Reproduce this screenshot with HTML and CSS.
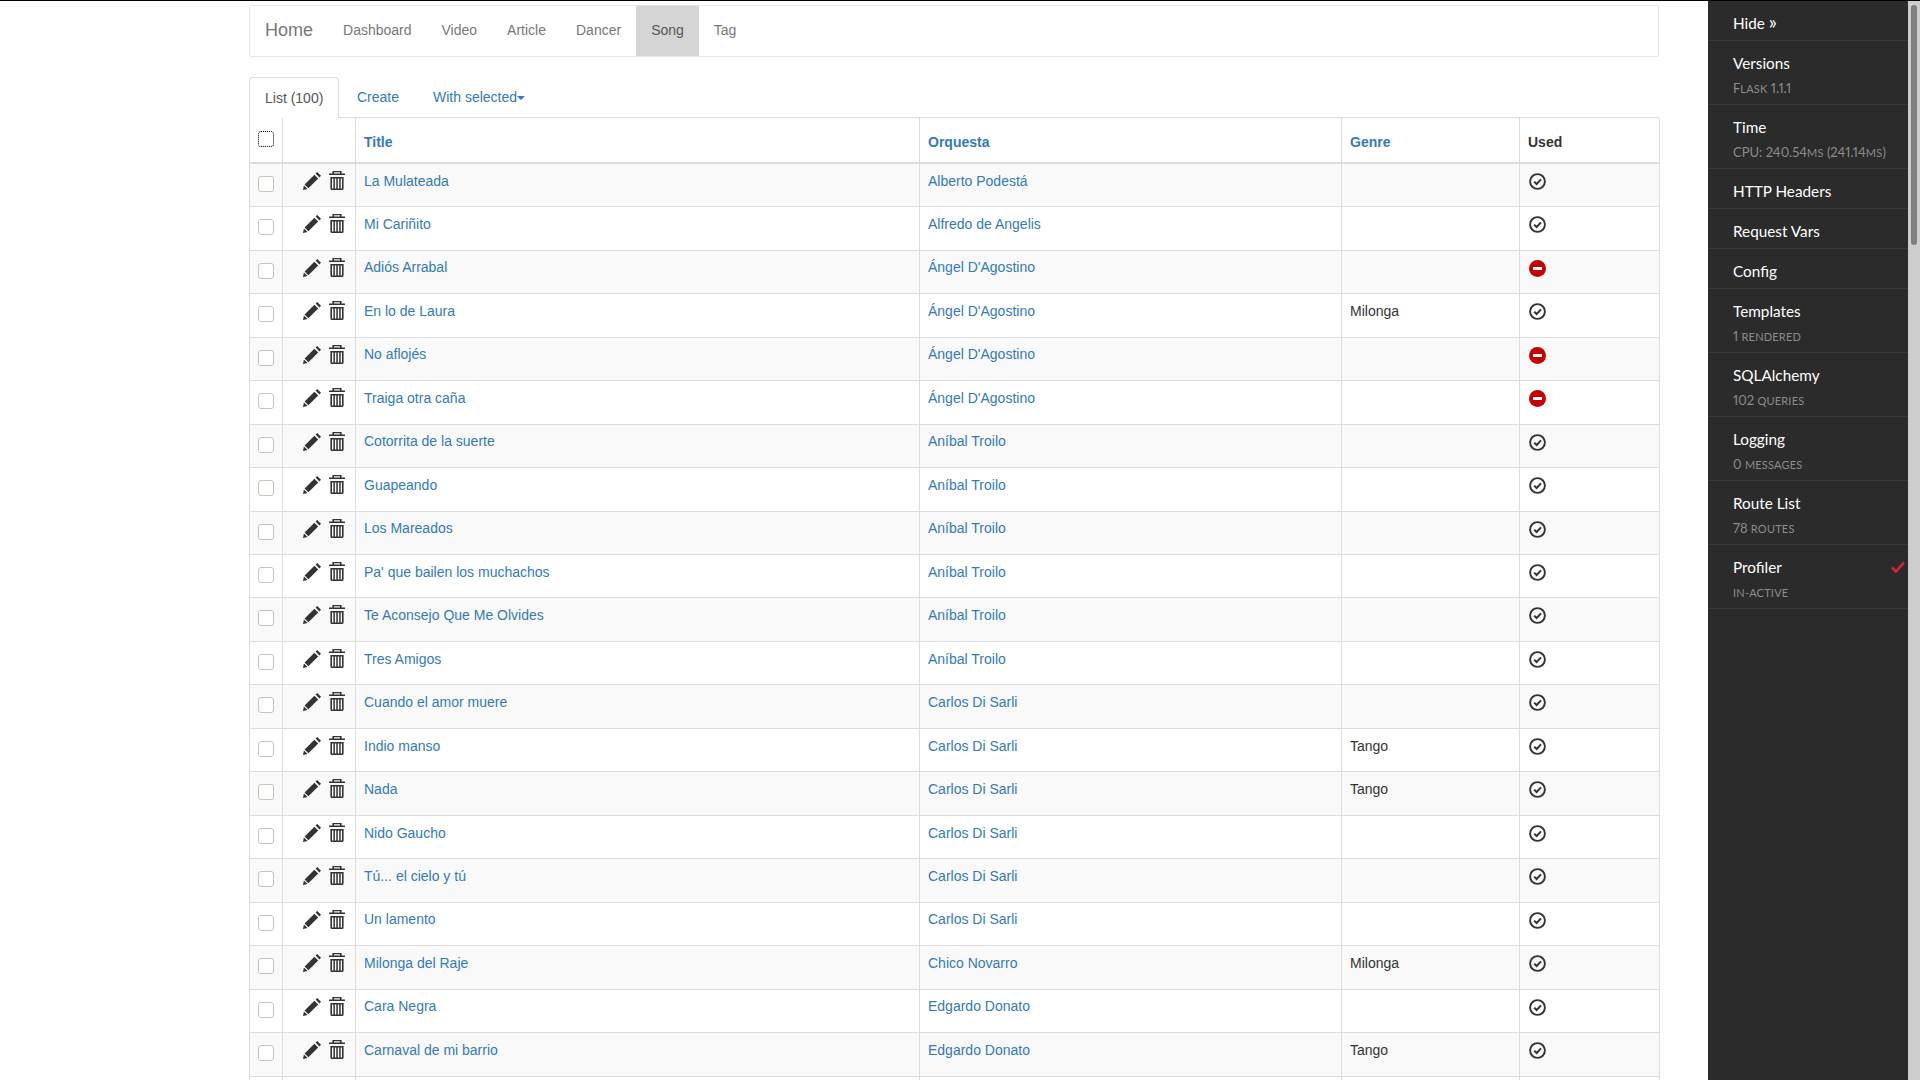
FILE: index.html
```html
<!DOCTYPE html>
<html lang="en">
<head>
<meta charset="utf-8">
<title>Song - Home</title>
<link rel="stylesheet" href="styles.css">
</head>
<body>
<svg class="defs" width="0" height="0" aria-hidden="true">
  <symbol id="pencil" viewBox="0 0 18 18">
    <path fill="#333" d="M0 18l.9-4.6 3.7 3.7zM1.6 12.4L11.4 2.8l3.8 3.8-9.8 9.7zM12.6 1.6L14.2 0 18 3.8l-1.6 1.6z"/>
  </symbol>
  <symbol id="trash" viewBox="0 0 16 19">
    <path fill="#333" d="M3.4 0h9.2v2.4H16V4H0V2.4h3.4zM5 1.2v1.2h6V1.2zM1.4 6H14.6V17.4Q14.6 19 13 19H3Q1.4 19 1.4 17.4zM3 7.4V17.4H4.4V7.4zM5.9 7.4V17.4H7.3V7.4zM8.8 7.4V17.4H10.2V7.4zM11.7 7.4V17.4H13V7.4z" fill-rule="evenodd"/>
  </symbol>
  <symbol id="ok" viewBox="0 0 17 17">
    <circle cx="8.5" cy="8.5" r="7.4" fill="none" stroke="#333" stroke-width="1.9"/>
    <path d="M5.2 8.6l2.4 2.4 4.4-4.6" fill="none" stroke="#333" stroke-width="2"/>
  </symbol>
  <symbol id="no" viewBox="0 0 17 17">
    <circle cx="8.5" cy="8.5" r="8.5" fill="#c40000"/>
    <rect x="4" y="7" width="9" height="3" fill="#fff"/>
  </symbol>
</svg>

<main class="page">
  <nav class="navbar">
    <a class="brand">Home</a>
    <a class="nav-item">Dashboard</a>
    <a class="nav-item">Video</a>
    <a class="nav-item">Article</a>
    <a class="nav-item">Dancer</a>
    <a class="nav-item active">Song</a>
    <a class="nav-item">Tag</a>
  </nav>

  <div class="tabs">
    <a class="tab current">List (100)</a>
    <a class="tab create">Create</a>
    <a class="tab selected">With selected<i class="caret"></i></a>
  </div>

  <table class="grid">
    <colgroup>
      <col class="c-check"><col class="c-actions"><col class="c-title"><col class="c-orq"><col class="c-genre"><col class="c-used">
    </colgroup>
    <thead>
      <tr>
        <th><input class="check focus" type="checkbox"></th>
        <th></th>
        <th><a>Title</a></th>
        <th><a>Orquesta</a></th>
        <th><a>Genre</a></th>
        <th>Used</th>
      </tr>
    </thead>
    <tbody>
      <tr><td><input class="check" type="checkbox"></td><td class="acts"><svg class="pen"><use href="#pencil"/></svg><svg class="bin"><use href="#trash"/></svg></td><td class="txt"><a>La Mulateada</a></td><td class="txt"><a>Alberto Podestá</a></td><td class="txt"></td><td><svg class="state"><use href="#ok"/></svg></td></tr>
      <tr><td><input class="check" type="checkbox"></td><td class="acts"><svg class="pen"><use href="#pencil"/></svg><svg class="bin"><use href="#trash"/></svg></td><td class="txt"><a>Mi Cariñito</a></td><td class="txt"><a>Alfredo de Angelis</a></td><td class="txt"></td><td><svg class="state"><use href="#ok"/></svg></td></tr>
      <tr><td><input class="check" type="checkbox"></td><td class="acts"><svg class="pen"><use href="#pencil"/></svg><svg class="bin"><use href="#trash"/></svg></td><td class="txt"><a>Adiós Arrabal</a></td><td class="txt"><a>Ángel D'Agostino</a></td><td class="txt"></td><td><svg class="state"><use href="#no"/></svg></td></tr>
      <tr><td><input class="check" type="checkbox"></td><td class="acts"><svg class="pen"><use href="#pencil"/></svg><svg class="bin"><use href="#trash"/></svg></td><td class="txt"><a>En lo de Laura</a></td><td class="txt"><a>Ángel D'Agostino</a></td><td class="txt">Milonga</td><td><svg class="state"><use href="#ok"/></svg></td></tr>
      <tr><td><input class="check" type="checkbox"></td><td class="acts"><svg class="pen"><use href="#pencil"/></svg><svg class="bin"><use href="#trash"/></svg></td><td class="txt"><a>No aflojés</a></td><td class="txt"><a>Ángel D'Agostino</a></td><td class="txt"></td><td><svg class="state"><use href="#no"/></svg></td></tr>
      <tr><td><input class="check" type="checkbox"></td><td class="acts"><svg class="pen"><use href="#pencil"/></svg><svg class="bin"><use href="#trash"/></svg></td><td class="txt"><a>Traiga otra caña</a></td><td class="txt"><a>Ángel D'Agostino</a></td><td class="txt"></td><td><svg class="state"><use href="#no"/></svg></td></tr>
      <tr><td><input class="check" type="checkbox"></td><td class="acts"><svg class="pen"><use href="#pencil"/></svg><svg class="bin"><use href="#trash"/></svg></td><td class="txt"><a>Cotorrita de la suerte</a></td><td class="txt"><a>Aníbal Troilo</a></td><td class="txt"></td><td><svg class="state"><use href="#ok"/></svg></td></tr>
      <tr><td><input class="check" type="checkbox"></td><td class="acts"><svg class="pen"><use href="#pencil"/></svg><svg class="bin"><use href="#trash"/></svg></td><td class="txt"><a>Guapeando</a></td><td class="txt"><a>Aníbal Troilo</a></td><td class="txt"></td><td><svg class="state"><use href="#ok"/></svg></td></tr>
      <tr><td><input class="check" type="checkbox"></td><td class="acts"><svg class="pen"><use href="#pencil"/></svg><svg class="bin"><use href="#trash"/></svg></td><td class="txt"><a>Los Mareados</a></td><td class="txt"><a>Aníbal Troilo</a></td><td class="txt"></td><td><svg class="state"><use href="#ok"/></svg></td></tr>
      <tr><td><input class="check" type="checkbox"></td><td class="acts"><svg class="pen"><use href="#pencil"/></svg><svg class="bin"><use href="#trash"/></svg></td><td class="txt"><a>Pa' que bailen los muchachos</a></td><td class="txt"><a>Aníbal Troilo</a></td><td class="txt"></td><td><svg class="state"><use href="#ok"/></svg></td></tr>
      <tr><td><input class="check" type="checkbox"></td><td class="acts"><svg class="pen"><use href="#pencil"/></svg><svg class="bin"><use href="#trash"/></svg></td><td class="txt"><a>Te Aconsejo Que Me Olvides</a></td><td class="txt"><a>Aníbal Troilo</a></td><td class="txt"></td><td><svg class="state"><use href="#ok"/></svg></td></tr>
      <tr><td><input class="check" type="checkbox"></td><td class="acts"><svg class="pen"><use href="#pencil"/></svg><svg class="bin"><use href="#trash"/></svg></td><td class="txt"><a>Tres Amigos</a></td><td class="txt"><a>Aníbal Troilo</a></td><td class="txt"></td><td><svg class="state"><use href="#ok"/></svg></td></tr>
      <tr><td><input class="check" type="checkbox"></td><td class="acts"><svg class="pen"><use href="#pencil"/></svg><svg class="bin"><use href="#trash"/></svg></td><td class="txt"><a>Cuando el amor muere</a></td><td class="txt"><a>Carlos Di Sarli</a></td><td class="txt"></td><td><svg class="state"><use href="#ok"/></svg></td></tr>
      <tr><td><input class="check" type="checkbox"></td><td class="acts"><svg class="pen"><use href="#pencil"/></svg><svg class="bin"><use href="#trash"/></svg></td><td class="txt"><a>Indio manso</a></td><td class="txt"><a>Carlos Di Sarli</a></td><td class="txt">Tango</td><td><svg class="state"><use href="#ok"/></svg></td></tr>
      <tr><td><input class="check" type="checkbox"></td><td class="acts"><svg class="pen"><use href="#pencil"/></svg><svg class="bin"><use href="#trash"/></svg></td><td class="txt"><a>Nada</a></td><td class="txt"><a>Carlos Di Sarli</a></td><td class="txt">Tango</td><td><svg class="state"><use href="#ok"/></svg></td></tr>
      <tr><td><input class="check" type="checkbox"></td><td class="acts"><svg class="pen"><use href="#pencil"/></svg><svg class="bin"><use href="#trash"/></svg></td><td class="txt"><a>Nido Gaucho</a></td><td class="txt"><a>Carlos Di Sarli</a></td><td class="txt"></td><td><svg class="state"><use href="#ok"/></svg></td></tr>
      <tr><td><input class="check" type="checkbox"></td><td class="acts"><svg class="pen"><use href="#pencil"/></svg><svg class="bin"><use href="#trash"/></svg></td><td class="txt"><a>Tú... el cielo y tú</a></td><td class="txt"><a>Carlos Di Sarli</a></td><td class="txt"></td><td><svg class="state"><use href="#ok"/></svg></td></tr>
      <tr><td><input class="check" type="checkbox"></td><td class="acts"><svg class="pen"><use href="#pencil"/></svg><svg class="bin"><use href="#trash"/></svg></td><td class="txt"><a>Un lamento</a></td><td class="txt"><a>Carlos Di Sarli</a></td><td class="txt"></td><td><svg class="state"><use href="#ok"/></svg></td></tr>
      <tr><td><input class="check" type="checkbox"></td><td class="acts"><svg class="pen"><use href="#pencil"/></svg><svg class="bin"><use href="#trash"/></svg></td><td class="txt"><a>Milonga del Raje</a></td><td class="txt"><a>Chico Novarro</a></td><td class="txt">Milonga</td><td><svg class="state"><use href="#ok"/></svg></td></tr>
      <tr><td><input class="check" type="checkbox"></td><td class="acts"><svg class="pen"><use href="#pencil"/></svg><svg class="bin"><use href="#trash"/></svg></td><td class="txt"><a>Cara Negra</a></td><td class="txt"><a>Edgardo Donato</a></td><td class="txt"></td><td><svg class="state"><use href="#ok"/></svg></td></tr>
      <tr><td><input class="check" type="checkbox"></td><td class="acts"><svg class="pen"><use href="#pencil"/></svg><svg class="bin"><use href="#trash"/></svg></td><td class="txt"><a>Carnaval de mi barrio</a></td><td class="txt"><a>Edgardo Donato</a></td><td class="txt">Tango</td><td><svg class="state"><use href="#ok"/></svg></td></tr>
      <tr><td></td><td></td><td></td><td></td><td></td><td></td></tr>
    </tbody>
  </table>
</main>

<aside class="toolbar">
  <div class="panel">
    <div class="tool"><div class="name">Hide <span class="arrows">»</span></div></div>
    <div class="tool"><div class="name">Versions</div><div class="sub">F<span class="sc">lask</span> 1.1.1</div></div>
    <div class="tool"><div class="name">Time</div><div class="sub">CPU: 240.54<span class="sc">ms</span> (241.14<span class="sc">ms</span>)</div></div>
    <div class="tool"><div class="name">HTTP Headers</div></div>
    <div class="tool"><div class="name">Request Vars</div></div>
    <div class="tool"><div class="name">Config</div></div>
    <div class="tool"><div class="name">Templates</div><div class="sub">1 <span class="sc">rendered</span></div></div>
    <div class="tool"><div class="name">SQLAlchemy</div><div class="sub">102 <span class="sc">queries</span></div></div>
    <div class="tool"><div class="name">Logging</div><div class="sub">0 <span class="sc">messages</span></div></div>
    <div class="tool"><div class="name">Route List</div><div class="sub">78 <span class="sc">routes</span></div></div>
    <div class="tool">
      <div class="name with-mark">Profiler
        <svg class="mark" viewBox="0 0 14 12"><path d="M1 6.5l4 4L13 1.5" fill="none" stroke="#d9272e" stroke-width="2.6"/></svg>
      </div>
      <div class="sub"><span class="sc">in-active</span></div>
    </div>
  </div>
  <div class="track"><div class="thumb"></div></div>
</aside>
</body>
</html>
```

FILE: styles.css
```css
* { box-sizing: border-box; }
html { overflow: hidden; }
body {
  margin: 0;
  height: 1080px;
  overflow: hidden;
  display: flex;
  border-top: 1px solid #000;
  background: #fff;
  color: #333;
  font-family: "Liberation Sans", Arial, sans-serif;
  font-size: 14px;
  line-height: 20px;
}
.defs { position: absolute; }
a { color: #337ab7; text-decoration: none; }

.page {
  width: 1708px;
  flex: none;
  padding: 4px 49px 0 249px;
  overflow: hidden;
}

.navbar {
  display: flex;
  height: 52px;
  border: 1px solid #e7e7e7;
  border-radius: 2px;
  background: #fff;
  margin-bottom: 20px;
}
.brand {
  padding: 14px 15px;
  font-size: 18px;
  color: #777;
}
.nav-item {
  padding: 14px 15px;
  color: #777;
}
.nav-item.active {
  background: #d5d5d5;
  color: #555;
}

.tabs {
  display: flex;
  height: 41px;
  border-bottom: 1px solid #ddd;
  white-space: nowrap;
}
.tab {
  padding: 10px 15px;
  height: 41px;
}
.tab.current {
  color: #555;
  background: #fff;
  border: 1px solid #ddd;
  border-bottom-color: #fff;
  border-radius: 4px 4px 0 0;
  width: 90px;
}
.tab.create { margin-left: 3px; }
.tab.selected { margin-left: 4px; }
.caret {
  display: inline-block;
  width: 0;
  height: 0;
  vertical-align: middle;
  border-top: 4px solid #337ab7;
  border-left: 4px solid transparent;
  border-right: 4px solid transparent;
}

.grid {
  width: 1410px;
  table-layout: fixed;
  border-collapse: collapse;
}
.c-check { width: 33px; }
.c-actions { width: 73px; }
.c-title { width: 564px; }
.c-orq { width: 422px; }
.c-genre { width: 178px; }
.c-used { width: 140px; }

.grid th, .grid td {
  border: 1px solid #ddd;
  padding: 7px 8px 8px;
  text-align: left;
  vertical-align: top;
}
.grid td.txt { padding-top: 6.7px; }
.grid thead tr { height: 45.3px; }
.grid th { border-top: 0; border-bottom-width: 2px; padding-top: 14px; font-weight: 700; }
.grid th:first-child { padding-top: 12px; }
.grid tbody tr { height: 43.48px; }
.grid tbody tr:nth-child(odd) { background: #f9f9f9; }
.grid tbody tr:last-child td { padding: 0; }

.check {
  appearance: none;
  display: block;
  width: 16px;
  height: 16px;
  margin: 5px 0 0 0;
  background: #fff;
  border: 1px solid #c9c2ba;
  border-radius: 3px;
}
.check.focus {
  margin-top: 1px;
  border: 1px dotted #000;
}

.acts { white-space: nowrap; font-size: 0; padding-left: 20px !important; }
.pen { width: 18px; height: 18px; vertical-align: top; margin-top: 1px; }
.bin { width: 16px; height: 19px; vertical-align: top; margin-left: 8px; }
.state { display: block; width: 17px; height: 17px; margin: 2px 0 0 1px; }

.toolbar {
  width: 212px;
  flex: none;
  height: 1079px;
  display: flex;
}
.panel {
  width: 200px;
  flex: none;
  background: #2b2b2b;
  font-family: Lato, "Liberation Sans", sans-serif;
}
.tool {
  padding: 12px 25px 7px;
  border-bottom: 1px solid #3a3a3a;
  color: #fff;
  font-size: 15.3px;
  line-height: 20px;
}
.name { color: #fff; }
.arrows { font-size: 19px; line-height: 16px; }
.with-mark { display: flex; justify-content: space-between; align-items: center; margin-right: -22px; }
.mark { width: 14px; height: 12px; }
.sub {
  height: 20px;
  margin: 5px 0 -1px;
  color: #8c8c8c;
  font-size: 13px;
  font-variant-numeric: proportional-nums;
  white-space: nowrap;
}
.sc {
  font-size: 11px;
  text-transform: uppercase;
  letter-spacing: .2px;
}
.track {
  width: 12px;
  flex: none;
  background: #cdcdcd;
  padding: 4px 3px 0;
}
.thumb {
  width: 6px;
  height: 240px;
  background: #7f7f7f;
  border-radius: 3px;
}
```
